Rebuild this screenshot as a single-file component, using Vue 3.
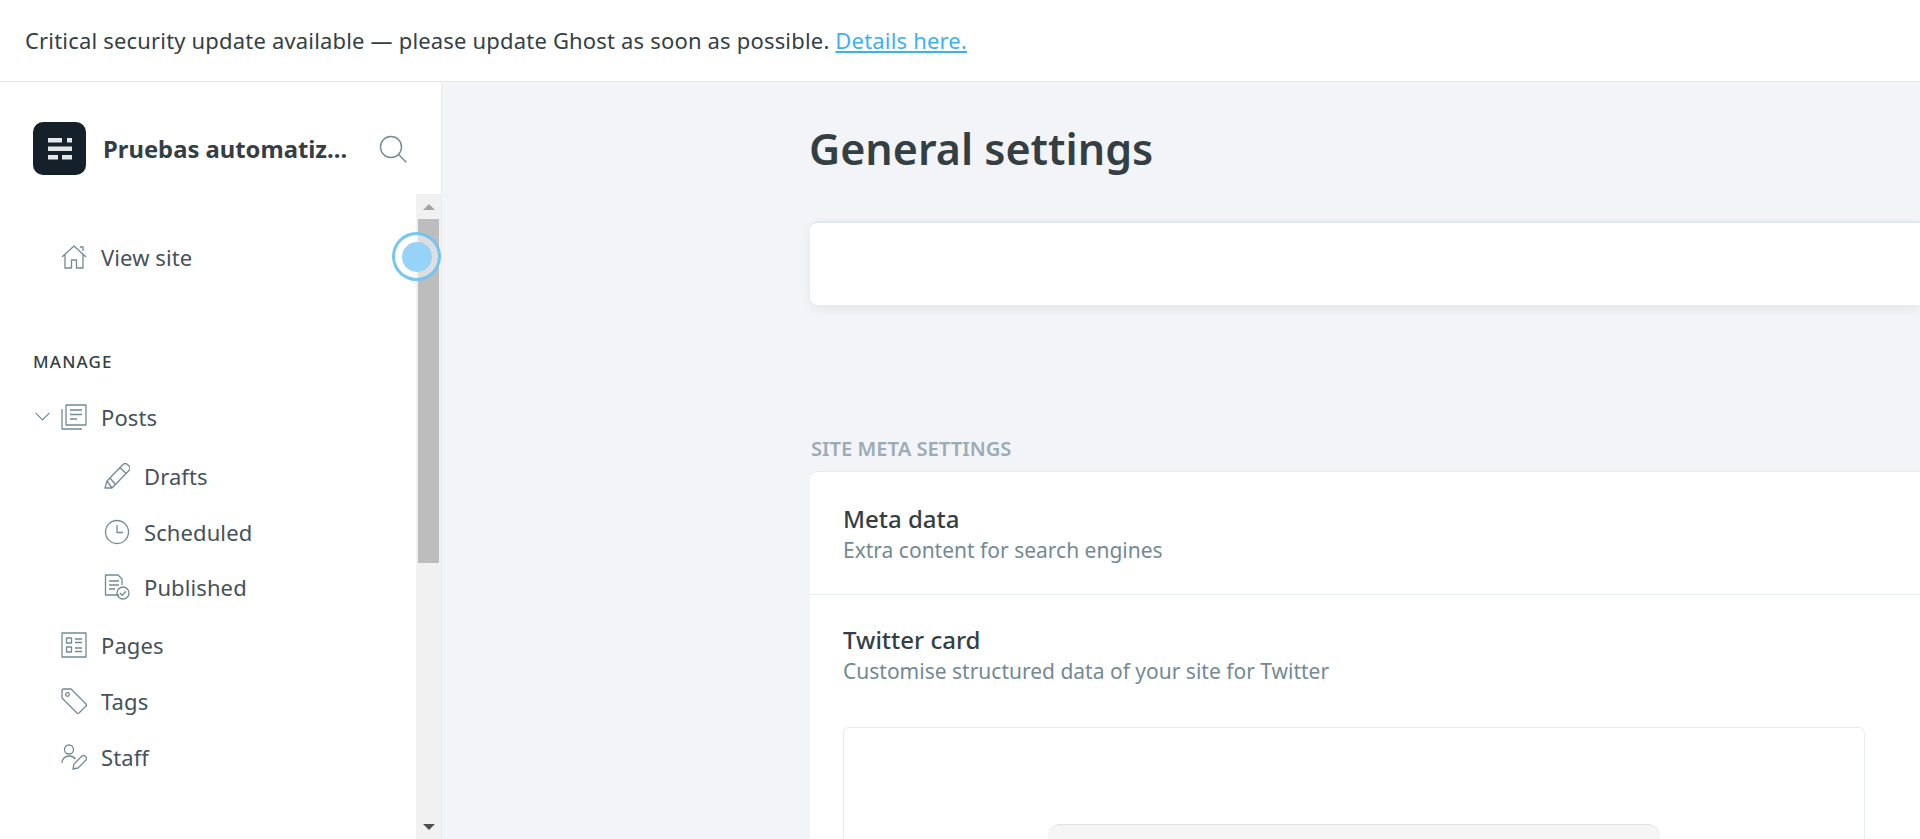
<script setup>
const subItems = [
  { label: 'Drafts', icon: 'drafts' },
  { label: 'Scheduled', icon: 'clock' },
  { label: 'Published', icon: 'published' }
]
const mainItems = [
  { label: 'Pages', icon: 'pages' },
  { label: 'Tags', icon: 'tag' },
  { label: 'Staff', icon: 'staff' }
]
</script>

<template>
  <div class="page">
    <div class="banner">
      Critical security update available — please update Ghost as soon as possible.
      <a class="banner-link" href="#">Details here.</a>
    </div>

    <div class="body">
      <aside class="sidebar">
        <div class="head">
          <div class="logo">
            <svg width="24" height="22" viewBox="0 0 24 22" fill="#e4e6e8">
              <rect x="0" y="0" width="14" height="4.500" />
              <rect x="19" y="0" width="5" height="4.500" />
              <rect x="0" y="8.500" width="24" height="4.500" />
              <rect x="0" y="17" width="10" height="4.500" />
              <rect x="14" y="17" width="10" height="4.500" />
            </svg>
          </div>
          <div class="site-name">Pruebas automatiz...</div>
          <svg class="search" width="28" height="28" viewBox="0 0 28 28" fill="none" stroke="#738a94" stroke-width="1.4">
            <circle cx="12" cy="12" r="10.5" />
            <path d="M19.5 19.5l7.5 7.5" stroke-linecap="round" />
          </svg>
        </div>

        <div class="nav-wrap">
          <nav class="nav">
            <a class="item view-site">
              <svg class="icon" viewBox="0 0 26 26">
                <path d="M1 13L13 2l12 11M4 10.5V24h6.5v-8h5v8H22V10.500M19 3h3v4" />
              </svg>
              View site
            </a>

            <div class="nav-title">MANAGE</div>

            <a class="item posts">
              <svg class="chevron" width="15" height="9" viewBox="0 0 15 9" fill="none" stroke="#738a94" stroke-width="1.1">
                <path d="M.5.8L7.500 8l7-7.200" />
              </svg>
              <svg class="icon" viewBox="0 0 26 26">
                <path d="M5 1h20v20H5zM1 5v20h20M9 6h12M9 10.500h12M9 15h7" />
              </svg>
              Posts
            </a>

            <a v-for="sub in subItems" :key="sub.label" class="item sub">
              <svg class="icon" viewBox="0 0 26 26">
                <template v-if="sub.icon === 'drafts'">
                  <path d="M1 25l2-7L19 1.500a3 3 0 0 1 4.500 0l1.500 1.500a3 3 0 0 1 0 4.500L8 25zM3 18l5 7M6 15l5 6M16 4.500l5.500 5.500" />
                </template>
                <template v-else-if="sub.icon === 'clock'">
                  <circle cx="13" cy="13" r="11.500" />
                  <path d="M13 6v7.500h6" />
                </template>
                <template v-else>
                  <path d="M15 21H1.500V1H14l4 4v6M5 7h10M5 11h10M5 15h6" />
                  <circle cx="19" cy="19" r="6" />
                  <path d="M16 19l2.200 2.200 3.800-4" />
                </template>
              </svg>
              {{ sub.label }}
            </a>

            <a v-for="it in mainItems" :key="it.label" class="item plain">
              <svg class="icon" viewBox="0 0 26 26">
                <template v-if="it.icon === 'pages'">
                  <path d="M1 1h24v24H1zM5.500 6h5v5h-5zM5.500 15h5v5h-5zM14 7h7M14 10.500h7M14 16h7M14 19.500h7" />
                </template>
                <template v-else-if="it.icon === 'tag'">
                  <path d="M1 2.500A1.500 1.500 0 0 1 2.500 1h7.500l15 15a1.500 1.500 0 0 1 0 2L18 25a1.500 1.500 0 0 1-2 0L1 10z" />
                  <circle cx="6.500" cy="6.500" r="1.800" />
                </template>
                <template v-else>
                  <circle cx="8" cy="5.500" r="4.500" />
                  <path d="M1 19c0-4 3-7 7-7 3 0 5 1 6.500 3M12 25l1-5 8-8a2 2 0 0 1 3 0l1 1a2 2 0 0 1 0 3l-8 8z" />
                </template>
              </svg>
              {{ it.label }}
            </a>
          </nav>

          <div class="scrollbar">
            <div class="arrow up"></div>
            <div class="track"><div class="thumb"></div></div>
            <div class="arrow down"></div>
          </div>

          <div class="touch"><div class="touch-dot"></div></div>
        </div>
      </aside>

      <main class="main">
        <h1 class="title">General settings</h1>
        <div class="card empty"></div>

        <div class="section-title">SITE META SETTINGS</div>
        <div class="card meta">
          <div class="row">
            <div class="row-title">Meta data</div>
            <div class="row-desc">Extra content for search engines</div>
          </div>
          <div class="row twitter">
            <div class="row-title">Twitter card</div>
            <div class="row-desc">Customise structured data of your site for Twitter</div>
            <div class="preview">
              <div class="preview-inner"></div>
            </div>
          </div>
        </div>
      </main>
    </div>
  </div>
</template>

<style scoped>
.page {
  height: 839px;
  display: flex;
  flex-direction: column;
  overflow: hidden;
  font-family: "Noto Sans", "Open Sans", sans-serif;
  color: #394047;
}

.banner {
  height: 81px;
  padding: 0 25px;
  line-height: 81px;
  font-size: 22px;
  letter-spacing: 0.18px;
  background: #fff;
  border-bottom: 1px solid #e3e6e9;
  color: #343f44;
  white-space: nowrap;
}

.banner-link {
  color: #3eb0ef;
  text-decoration: underline;
}

.body {
  flex: 1;
  display: flex;
  min-height: 0;
}

.sidebar {
  width: 441px;
  flex-shrink: 0;
  background: #fff;
  border-right: 1px solid #e8ebf0;
  display: flex;
  flex-direction: column;
}

.head {
  height: 112px;
  display: flex;
  align-items: center;
  padding: 21px 34px 0 33px;
  box-sizing: border-box;
  flex-shrink: 0;
}

.logo {
  width: 53px;
  height: 53px;
  border-radius: 10px;
  background: #15212a;
  display: flex;
  align-items: center;
  justify-content: center;
  flex-shrink: 0;
}

.site-name {
  margin-left: 17px;
  font-size: 23.800px;
  font-weight: 700;
  color: #343f44;
  white-space: nowrap;
  flex: 1;
}

.search {
  flex-shrink: 0;
}

.nav-wrap {
  flex: 1;
  min-height: 0;
  display: flex;
  position: relative;
}

.nav {
  flex: 1;
  min-width: 0;
  padding-top: 50px;
  font-size: 22px;
  letter-spacing: 0.1px;
  color: #465159;
}

.item {
  display: flex;
  align-items: center;
  height: 26px;
  padding-left: 61px;
  white-space: nowrap;
}

.icon {
  width: 26px;
  height: 26px;
  margin-right: 14px;
  flex-shrink: 0;
  fill: none;
  stroke: #738a94;
  stroke-width: 1.300;
  stroke-linejoin: round;
}

.nav-title {
  margin: 82px 0 0 33px;
  font-size: 17px;
  line-height: 20px;
  font-weight: 500;
  letter-spacing: 1.2px;
  color: #343f44;
}

.posts {
  margin-top: 32px;
  position: relative;
}

.chevron {
  position: absolute;
  left: 35px;
  top: 8px;
}

.sub {
  margin-bottom: 29.500px;
  padding-left: 104px;
}

.posts + .sub {
  margin-top: 33px;
}

.plain {
  margin-bottom: 30px;
}

.sub + .plain {
  margin-top: 32px;
}

.scrollbar {
  width: 25px;
  flex-shrink: 0;
  background: #f1f1f1;
  display: flex;
  flex-direction: column;
}

.arrow {
  height: 25px;
  flex-shrink: 0;
  display: flex;
  align-items: center;
  justify-content: center;
}

.arrow::before {
  content: "";
  border-left: 6px solid transparent;
  border-right: 6px solid transparent;
}

.up::before {
  border-bottom: 6px solid #a3a3a3;
}

.down::before {
  border-top: 6px solid #505050;
}

.track {
  flex: 1;
  padding: 0 2px;
}

.thumb {
  height: 344px;
  background: #bdbdbd;
}

.touch {
  position: absolute;
  left: 392px;
  top: 38px;
  width: 49px;
  height: 49px;
  box-sizing: border-box;
  border: 3px solid rgba(110, 195, 240, 0.95);
  border-radius: 50%;
  background: rgba(255, 255, 255, 0.5);
  display: flex;
  align-items: center;
  justify-content: center;
}

.touch-dot {
  width: 30px;
  height: 30px;
  border-radius: 50%;
  background: #97d3f8;
}

.main {
  flex: 1;
  min-width: 0;
  background: #f3f4f8;
  padding-left: 368px;
  overflow: hidden;
}

.title {
  margin: 0 0 0 -1px;
  padding-top: 38px;
  height: 58px;
  line-height: 58px;
  font-size: 43px;
  font-weight: 600;
  color: #343f44;
  white-space: nowrap;
}

.card {
  background: #fff;
  border-radius: 8px 0 0 8px;
}

.empty {
  margin-top: 43px;
  height: 82px;
  border-top: 2px solid #dfe9ef;
  box-shadow: 0 4px 12px rgba(0, 0, 0, 0.06);
}

.section-title {
  margin: 131px 0 0 1px;
  line-height: 24px;
  font-size: 20.200px;
  font-weight: 600;
  color: #9bacb5;
}

.meta {
  margin-top: 11px;
  border-top: 1px solid #e8ebef;
}

.row {
  padding: 32px 33px 0;
  height: 90px;
  border-bottom: 1px solid #e6eef2;
}

.row-title {
  font-size: 24px;
  line-height: 30px;
  font-weight: 500;
  color: #343f44;
}

.row-desc {
  font-size: 21px;
  line-height: 32px;
  color: #738a94;
}

.twitter {
  padding-top: 30px;
  height: auto;
  border-bottom: 0;
}

.preview {
  margin-top: 40px;
  width: 1022px;
  height: 200px;
  box-sizing: border-box;
  border: 1px solid #e6eef4;
  border-radius: 6px;
  padding: 96px 0 0 204px;
}

.preview-inner {
  width: 612px;
  height: 100px;
  background: #f5f5f5;
  border-radius: 12px;
  border-top: 1px solid #e0e0e0;
}
</style>

<style>
html, body { margin: 0; background: #fff; }
</style>
